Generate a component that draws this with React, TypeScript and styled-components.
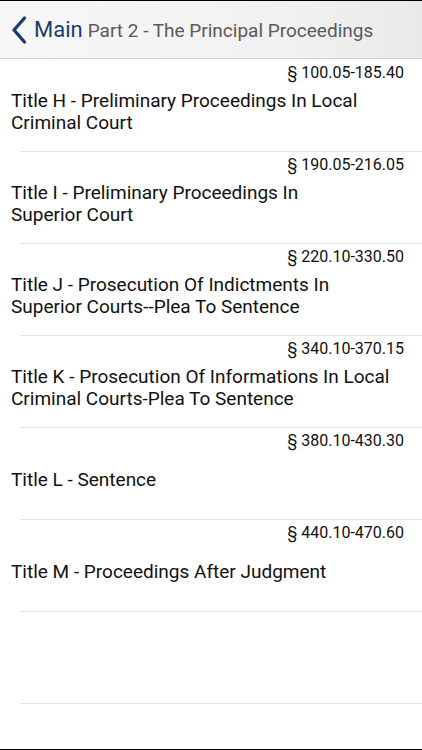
import React from "react";
import styled, { createGlobalStyle } from "styled-components";

const Global = createGlobalStyle`
  html, body { margin: 0; padding: 0; background: #fff; }
  body { font-family: "Roboto", "Liberation Sans", sans-serif; -webkit-font-smoothing: antialiased; }
`;

const Page = styled.div`
  width: 422px;
  height: 750px;
  box-sizing: border-box;
  border-top: 1px solid #000;
  border-bottom: 1px solid #000;
  display: flex;
  flex-direction: column;
  overflow: hidden;
  background: #fff;
`;

const NavBar = styled.div`
  height: 57px;
  flex: none;
  display: flex;
  align-items: center;
  background: linear-gradient(to right, #f7f7f7, #f1f1f1 70%, #e9e9e9);
  border-bottom: 1px solid #d2d2d2;
  padding-left: 11px;
`;

const Back = styled.div`
  display: flex;
  align-items: center;
  gap: 7px;
  color: #1d3c6e;
  font-size: 22px;
  svg { display: block; }
`;

const NavTitle = styled.div`
  margin-left: 5px;
  color: #5a5a5a;
  font-size: 19px;
  white-space: nowrap;
  padding-top: 1px;
`;

const List = styled.div`
  padding-top: 1px;
  display: flex;
  flex-direction: column;
`;

const Row = styled.div`
  height: 91px;
  display: grid;
  grid-template-rows: 25px 53px 1fr;
  position: relative;
  margin-bottom: 1px;
  &::after {
    content: "";
    position: absolute;
    left: 20px;
    right: 0;
    bottom: -1px;
    height: 1px;
    background: #e3e3e3;
  }
`;

const Section = styled.div`
  text-align: right;
  padding-right: 18px;
  font-size: 16px;
  line-height: 25px;
  color: #111;
`;

const TitleArea = styled.div`
  display: flex;
  align-items: center;
  padding-left: 11px;
  padding-right: 12px;
  font-size: 19px;
  line-height: 22px;
  color: #111;
`;

const rows = [
  { sec: "§ 100.05-185.40", title: ["Title H - Preliminary Proceedings In Local", "Criminal Court"] },
  { sec: "§ 190.05-216.05", title: ["Title I - Preliminary Proceedings In", "Superior Court"] },
  { sec: "§ 220.10-330.50", title: ["Title J - Prosecution Of Indictments In", "Superior Courts--Plea To Sentence"] },
  { sec: "§ 340.10-370.15", title: ["Title K - Prosecution Of Informations In Local", "Criminal Courts-Plea To Sentence"] },
  { sec: "§ 380.10-430.30", title: ["Title L - Sentence"] },
  { sec: "§ 440.10-470.60", title: ["Title M - Proceedings After Judgment"] },
];

export default function App() {
  return (
    <>
      <Global />
      <Page>
        <NavBar>
          <Back>
            <svg width="16" height="30" viewBox="0 0 16 30">
              <path d="M13.5 3 L3 15 L13.5 27" fill="none" stroke="#1d3c6e" strokeWidth="3.4" strokeLinecap="round" strokeLinejoin="round" />
            </svg>
            <span>Main</span>
          </Back>
          <NavTitle>Part 2 - The Principal Proceedings</NavTitle>
        </NavBar>
        <List>
          {rows.map((r) => (
            <Row key={r.sec}>
              <Section>{r.sec}</Section>
              <TitleArea>
                <div>
                  {r.title.map((t) => (
                    <div key={t}>{t}</div>
                  ))}
                </div>
              </TitleArea>
            </Row>
          ))}
          <Row />
        </List>
      </Page>
    </>
  );
}
